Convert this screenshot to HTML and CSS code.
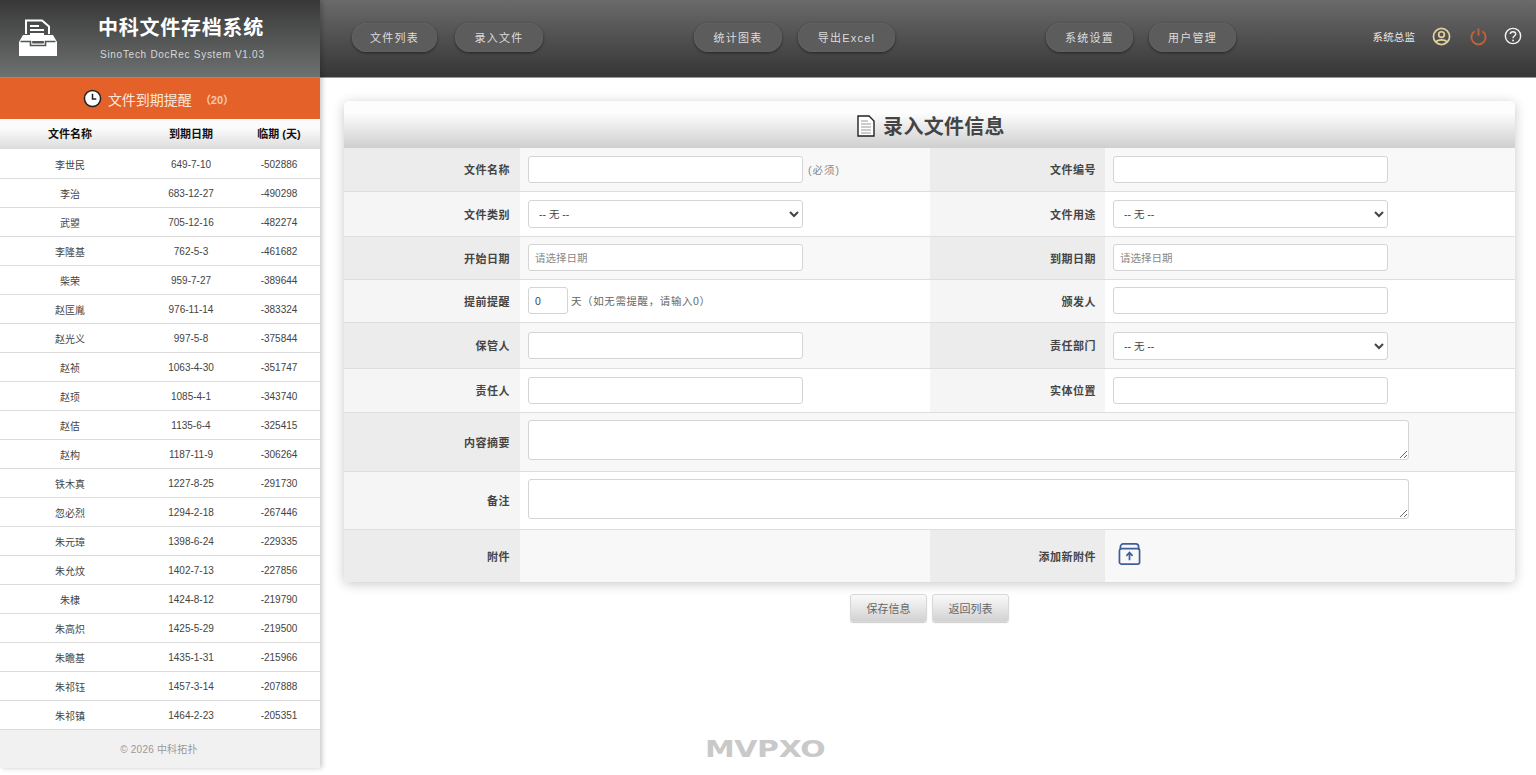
FILE: index.html
```html
<!DOCTYPE html>
<html lang="zh-CN">
<head>
<meta charset="utf-8">
<title>中科文件存档系统</title>
<link rel="stylesheet" href="styles.css">
</head>
<body>
<div class="app">
  <aside class="sidebar">
    <div class="brand">
      <svg class="brand-icon" viewBox="0 0 40 40" width="40" height="40">
        <path d="M8 16V2.500H24L31 8.500V16" fill="none" stroke="#fff" stroke-width="2"/>
        <path d="M12 8H21M12 12H26M12 16H26" stroke="#fff" stroke-width="1.800"/>
        <path d="M5 17L1 24V38H39V24L35 17Z" fill="#fff"/>
        <path d="M2.500 23.500H12.500V27.500H27.500V23.500H37.500" fill="none" stroke="#555" stroke-width="1.600"/>
        <rect x="14" y="23" width="12" height="2.500" rx="1" fill="#555"/>
      </svg>
      <div class="brand-text">
        <div class="brand-title">中科文件存档系统</div>
        <div class="brand-sub">SinoTech DocRec System V1.03</div>
      </div>
    </div>
    <div class="alert-head">
      <svg viewBox="0 0 20 20" width="19" height="19">
        <circle cx="10" cy="10" r="8.500" fill="#fff" stroke="#222" stroke-width="1.600"/>
        <path d="M10 5V10.500H14" fill="none" stroke="#222" stroke-width="1.600"/>
      </svg>
      <span class="alert-title">文件到期提醒</span>
      <span class="alert-count">（20）</span>
    </div>
    <table class="expiry">
      <thead><tr><th>文件名称</th><th>到期日期</th><th>临期 (天)</th></tr></thead>
      <tbody>
        <tr><td>李世民</td><td>649-7-10</td><td>-502886</td></tr>
        <tr><td>李治</td><td>683-12-27</td><td>-490298</td></tr>
        <tr><td>武曌</td><td>705-12-16</td><td>-482274</td></tr>
        <tr><td>李隆基</td><td>762-5-3</td><td>-461682</td></tr>
        <tr><td>柴荣</td><td>959-7-27</td><td>-389644</td></tr>
        <tr><td>赵匡胤</td><td>976-11-14</td><td>-383324</td></tr>
        <tr><td>赵光义</td><td>997-5-8</td><td>-375844</td></tr>
        <tr><td>赵祯</td><td>1063-4-30</td><td>-351747</td></tr>
        <tr><td>赵顼</td><td>1085-4-1</td><td>-343740</td></tr>
        <tr><td>赵佶</td><td>1135-6-4</td><td>-325415</td></tr>
        <tr><td>赵构</td><td>1187-11-9</td><td>-306264</td></tr>
        <tr><td>铁木真</td><td>1227-8-25</td><td>-291730</td></tr>
        <tr><td>忽必烈</td><td>1294-2-18</td><td>-267446</td></tr>
        <tr><td>朱元璋</td><td>1398-6-24</td><td>-229335</td></tr>
        <tr><td>朱允炆</td><td>1402-7-13</td><td>-227856</td></tr>
        <tr><td>朱棣</td><td>1424-8-12</td><td>-219790</td></tr>
        <tr><td>朱高炽</td><td>1425-5-29</td><td>-219500</td></tr>
        <tr><td>朱瞻基</td><td>1435-1-31</td><td>-215966</td></tr>
        <tr><td>朱祁钰</td><td>1457-3-14</td><td>-207888</td></tr>
        <tr><td>朱祁镇</td><td>1464-2-23</td><td>-205351</td></tr>
      </tbody>
    </table>
    <div class="side-foot">© 2026 中科拓扑</div>
  </aside>
  <div class="content">
    <header class="topbar">
      <nav class="nav">
        <div class="nav-group"><a class="pill pill-first">文件列表</a><a class="pill">录入文件</a></div>
        <div class="nav-group"><a class="pill">统计图表</a><a class="pill pill-wide">导出Excel</a></div>
        <div class="nav-group"><a class="pill">系统设置</a><a class="pill">用户管理</a></div>
      </nav>
      <div class="user">
        <span class="user-name">系统总监</span>
        <svg viewBox="0 0 20 20" width="19" height="19">
          <circle cx="10" cy="10" r="8.500" fill="none" stroke="#e3d09a" stroke-width="1.800"/>
          <circle cx="10" cy="8" r="3" fill="none" stroke="#e3d09a" stroke-width="1.800"/>
          <path d="M4.500 16C5.500 12.800 14.500 12.800 15.500 16" fill="none" stroke="#e3d09a" stroke-width="1.800"/>
        </svg>
        <svg viewBox="0 0 20 20" width="19" height="19">
          <path d="M6 4.500A7.500 7.500 0 1 0 14 4.500" fill="none" stroke="#c0623a" stroke-width="2"/>
          <path d="M10 1.500V9" stroke="#c0623a" stroke-width="2"/>
        </svg>
        <svg class="help" viewBox="0 0 20 20" width="18" height="18">
          <circle cx="10" cy="10" r="8.500" fill="none" stroke="#f2f2f2" stroke-width="1.600"/>
          <path d="M7 7.800C7 4.300 13 4.300 13 7.800C13 10 10 10 10 12.500" fill="none" stroke="#f2f2f2" stroke-width="1.600"/>
          <circle cx="10" cy="15" r="1" fill="#f2f2f2"/>
        </svg>
      </div>
    </header>
    <main class="main">
      <section class="panel">
        <h1 class="panel-title">
          <svg viewBox="0 0 18 22" width="18" height="22">
            <path d="M1 1H12L17 6V21H1Z" fill="#fff" stroke="#222" stroke-width="1.400"/>
            <path d="M4 6H11M4 9H14M4 12H14M4 15H14M4 18H14" stroke="#999" stroke-width="1"/>
          </svg>
          录入文件信息
        </h1>
        <table class="form">
          <tbody>
            <tr class="row-shade r43">
              <th>文件名称</th>
              <td><input class="ctl" type="text"><span class="hint hint-req">(必须)</span></td>
              <th>文件编号</th>
              <td><input class="ctl" type="text"></td>
            </tr>
            <tr class="r45">
              <th>文件类别</th>
              <td><select class="ctl sel"><option>-- 无 --</option></select></td>
              <th>文件用途</th>
              <td><select class="ctl sel"><option>-- 无 --</option></select></td>
            </tr>
            <tr class="row-shade r43">
              <th>开始日期</th>
              <td><input class="ctl" type="text" placeholder="请选择日期"></td>
              <th>到期日期</th>
              <td><input class="ctl" type="text" placeholder="请选择日期"></td>
            </tr>
            <tr class="r43">
              <th>提前提醒</th>
              <td><input class="ctl ctl-num" type="text" value="0"><span class="hint hint-day">天（如无需提醒，请输入0）</span></td>
              <th>颁发人</th>
              <td><input class="ctl" type="text"></td>
            </tr>
            <tr class="row-shade r46">
              <th>保管人</th>
              <td><input class="ctl" type="text"></td>
              <th>责任部门</th>
              <td><select class="ctl sel"><option>-- 无 --</option></select></td>
            </tr>
            <tr class="r44">
              <th>责任人</th>
              <td><input class="ctl" type="text"></td>
              <th>实体位置</th>
              <td><input class="ctl" type="text"></td>
            </tr>
            <tr class="row-shade r59">
              <th>内容摘要</th>
              <td colspan="3"><textarea class="area"></textarea></td>
            </tr>
            <tr class="r58">
              <th>备注</th>
              <td colspan="3"><textarea class="area"></textarea></td>
            </tr>
            <tr class="row-shade r53">
              <th>附件</th>
              <td></td>
              <th>添加新附件</th>
              <td>
                <svg class="upload" viewBox="0 0 24 24" width="23" height="23">
                  <path d="M2.500 8V5A3 3 0 0 1 5.500 2H18.500A3 3 0 0 1 21.500 5V8" fill="none" stroke="#3f5f9a" stroke-width="1.800"/>
                  <rect x="1.500" y="7" width="21" height="16" rx="2" fill="none" stroke="#3f5f9a" stroke-width="1.800"/>
                  <path d="M12 19V12M8.800 14.500L12 11L15.200 14.500" fill="none" stroke="#3f5f9a" stroke-width="1.800"/>
                </svg>
              </td>
            </tr>
          </tbody>
        </table>
      </section>
      <div class="actions">
        <button class="btn" type="button">保存信息</button>
        <button class="btn" type="button">返回列表</button>
      </div>
    </main>
  </div>
</div>
<div class="watermark">MVPXO</div>
</body>
</html>
```

FILE: styles.css
```css
* { box-sizing: border-box; }
html, body { margin: 0; height: 775px; overflow: hidden; background: #fff; }
body { font-family: "Liberation Sans", "Noto Sans CJK SC", sans-serif; color: #333; font-size: 11px; }

.app { display: flex; height: 768px; }

.sidebar {
  width: 320px; flex: none; display: flex; flex-direction: column;
  background: #fff; box-shadow: 2px 0 5px rgba(0,0,0,.22); position: relative; z-index: 2;
}
.brand {
  height: 78px; display: flex; padding: 18px 0 0 18px;
  background: linear-gradient(#383838, #6e7171);
  border-bottom: 1px solid #a08a70;
}
.brand-icon { flex: none; }
.brand-text { margin-left: 40px; }
.brand-title { font-size: 20px; font-weight: 700; color: #fff; line-height: 21px; letter-spacing: .75px; white-space: nowrap; }
.brand-sub { font-size: 10px; color: #d8d8d8; margin: 10px 0 0 2px; letter-spacing: .72px; line-height: 12px; white-space: nowrap; }

.alert-head {
  height: 41px; display: flex; align-items: center; justify-content: center;
  background: #e4622a; padding-right: 3px;
}
.alert-title { font-size: 14px; color: #fbe6da; margin-left: 6px; }
.alert-count { font-size: 11px; color: #f4c9ae; font-weight: 700; margin-left: 8px; }

.expiry { width: 320px; border-collapse: collapse; table-layout: fixed; flex: none; }
.expiry th {
  height: 30px; font-size: 11px; color: #111; font-weight: 700; text-align: center; padding: 0 0 2px;
  background: linear-gradient(#fbfbfb 30%, #dcdcdc);
}
.expiry td { height: 29px; font-size: 10px; color: #444; text-align: center; padding: 2px 0 0; border-bottom: 1px solid #dcdcdc; }
.expiry th:nth-child(1), .expiry td:nth-child(1) { width: 140px; }
.expiry th:nth-child(2), .expiry td:nth-child(2) { width: 102px; }
.expiry th:nth-child(3), .expiry td:nth-child(3) { width: 78px; padding-right: 4px; }

.side-foot {
  flex: 1; display: flex; align-items: center; justify-content: center;
  background: #f1f1f1; color: #999; font-size: 10px; letter-spacing: .2px; padding-right: 2px;
}

.content { flex: 1; min-width: 0; display: flex; flex-direction: column; }
.topbar {
  height: 78px; flex: none; display: flex; align-items: center;
  padding: 0 14px 3px 32px;
  background: linear-gradient(#6a6a6a, #363636);
  border-bottom: 1px solid #999;
}
.nav { display: flex; gap: 151px; }
.nav-group { display: flex; gap: 16px; }
.nav-group:first-child { gap: 18px; }
.pill {
  width: 88px; height: 29px; display: flex; align-items: center; justify-content: center;
  border-radius: 15px; background: #5c5c5c; color: #ddd; font-size: 11px; letter-spacing: 1.2px;
  box-shadow: 0 1px 3px rgba(0,0,0,.5), inset 0 0 1px rgba(255,255,255,.3);
}
.pill-first { width: 85px; }
.pill-wide { width: 97px; }
.nav-group:last-child .pill { width: 87px; }
.user { margin-left: auto; display: flex; align-items: center; margin-bottom: 2px; }
.user-name { color: #e8e8e8; font-size: 10.500px; margin-right: 17px; letter-spacing: .1px; }
.user svg + svg { margin-left: 18px; }
.user svg.help { margin-left: 16px; }

.main { flex: 1; padding: 23px 21px 0 24px; }
.panel { background: #fff; border-radius: 5px; box-shadow: 0 2px 12px rgba(0,0,0,.22); overflow: hidden; }
.panel-title {
  margin: 0; height: 47px; padding: 2px 0 0 3px; display: flex; align-items: center; justify-content: center; gap: 8px;
  font-size: 20px; font-weight: 700; color: #444; letter-spacing: .3px;
  background: linear-gradient(#fdfdfd 25%, #cfcfcf);
}
.form { width: 100%; border-collapse: collapse; table-layout: fixed; }
.form th {
  width: 176px; text-align: right; padding: 0 10px 0 0;
  font-size: 11px; font-weight: 700; color: #444; letter-spacing: .5px;
  background: #f5f5f5;
}
.form td { width: 410px; padding: 0 0 0 8px; background: #fff; font-size: 11px; color: #777; }
.form th:nth-child(3) { width: 175px; padding-right: 9px; }
.form tr { border-bottom: 1px solid #dedede; }
.form tr:last-child { border-bottom: 0; }
.row-shade th { background: #ececec; }
.row-shade td { background: #f8f8f8; }
.r43 th, .r43 td { height: 43px; }
.r44 th, .r44 td { height: 44px; }
.r45 th, .r45 td { height: 45px; }
.r46 th, .r46 td { height: 46px; }
.r46 td { padding-top: 1px; }
.r53 th, .r53 td { height: 53px; }
.r58 th, .r58 td { height: 58px; }
.r59 th, .r59 td { height: 59px; }
.r58 td, .r59 td { padding-bottom: 3px; }

.ctl {
  width: 275px; height: 27px; padding: 0 6px; border: 1px solid #d4d4d4; border-radius: 3px;
  background: #fff; font: 10.500px "Liberation Sans", "Noto Sans CJK SC", sans-serif; color: #444;
  vertical-align: middle; outline: 0;
}
.ctl::placeholder { color: #888; opacity: 1; }
.sel { height: 28px; }
.ctl-num { width: 40px; }
.hint { color: #888; font-size: 10.500px; vertical-align: middle; }
.hint-req { margin-left: 5px; letter-spacing: 1px; }
.hint-day { color: #666; margin-left: 3px; letter-spacing: .6px; }
.area {
  display: block; width: 881px; height: 40px; border: 1px solid #d4d4d4; border-radius: 3px;
  background: #fff; outline: 0; resize: vertical;
}
.upload { display: block; margin: -4px 0 0 5px; }

.actions { display: flex; justify-content: center; gap: 5px; margin-top: 12px; }
.btn {
  width: 77px; height: 28px; padding: 0; border: 1px solid #d8d8d8; border-radius: 3px;
  background: linear-gradient(#fafafa, #d2d2d2);
  box-shadow: 0 1px 1px rgba(0,0,0,.2);
  font: 11px "Liberation Sans", "Noto Sans CJK SC", sans-serif; color: #666;
}

.watermark {
  position: absolute; left: 705px; top: 737px; z-index: 3;
  font: 900 23px/24px "DejaVu Sans", sans-serif; color: #c9c9c9; letter-spacing: -.3px;
  transform: scaleX(1.3); transform-origin: left center;
}
```
